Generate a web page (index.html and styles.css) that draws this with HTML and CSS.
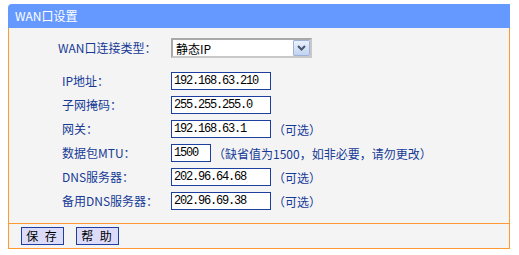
FILE: index.html
```html
<!DOCTYPE html>
<html lang="zh-CN">
<head>
  <meta charset="UTF-8">
  <title>WAN口设置</title>
  <link rel="stylesheet" href="styles.css">
</head>
<body>
  <div class="panel">
    <div class="panel-title">WAN口设置</div>

    <div class="panel-body">
      <div class="row row-type">
        <label class="lbl lbl-type">WAN口连接类型：</label>
        <div class="fake-select">
          <span class="fake-select-text">静态IP</span>
          <span class="fake-select-btn">
            <svg width="9" height="6" viewBox="0 0 9 6"><path d="M1 1 L4.5 4.5 L8 1" fill="none" stroke="#4a5670" stroke-width="2"/></svg>
          </span>
        </div>
      </div>

      <div class="row">
        <label class="lbl">IP地址：</label>
        <input class="txt" type="text" value="192.168.63.210">
      </div>
      <div class="row">
        <label class="lbl">子网掩码：</label>
        <input class="txt" type="text" value="255.255.255.0">
      </div>
      <div class="row">
        <label class="lbl">网关：</label>
        <input class="txt" type="text" value="192.168.63.1">
        <span class="hint">（可选）</span>
      </div>
      <div class="row">
        <label class="lbl">数据包MTU：</label>
        <input class="txt txt-short" type="text" value="1500">
        <span class="hint">（缺省值为1500，如非必要，请勿更改）</span>
      </div>
      <div class="row">
        <label class="lbl">DNS服务器：</label>
        <input class="txt" type="text" value="202.96.64.68">
        <span class="hint">（可选）</span>
      </div>
      <div class="row">
        <label class="lbl">备用DNS服务器：</label>
        <input class="txt" type="text" value="202.96.69.38">
        <span class="hint">（可选）</span>
      </div>
    </div>

    <div class="panel-foot">
      <button class="btn">保 存</button>
      <button class="btn">帮 助</button>
    </div>
  </div>
</body>
</html>
```

FILE: styles.css
```css
body {
  margin: 4px 0 0 8px;
  background-color: #ffffff;
  font-family: "Noto Sans CJK SC", "DejaVu Sans", sans-serif;
  font-size: 12px;
}
.panel {
  width: 502px;
}
.panel-title {
  height: 24px;
  line-height: 24px;
  padding-left: 7px;
  background-color: #6699ff;
  color: #ffffff;
  border-top-left-radius: 4px;
}
.panel-body {
  background-color: #f4f4f4;
  border-left: 1px solid #ff9933;
  border-right: 1px solid #ff9933;
  border-bottom: 1px solid #ff9933;
  padding: 10px 0 13px 0;
  display: flex;
  flex-direction: column;
  gap: 6px;
}
.row {
  display: flex;
  align-items: center;
  height: 18px;
}
.row-type {
  height: 20px;
  margin-bottom: 8px;
}
.lbl {
  width: 109px;
  padding-left: 53px;
  color: #163a96;
  line-height: 18px;
}
.lbl-type {
  padding-left: 49px;
  width: 113px;
}
.fake-select {
  box-sizing: border-box;
  width: 141px;
  height: 20px;
  border: 2px solid #a9a9a9;
  border-right-color: #c8c8c8;
  border-bottom-color: #c8c8c8;
  background-color: #ffffff;
  display: flex;
  align-items: center;
  justify-content: space-between;
}
.fake-select-text {
  padding-left: 3px;
  color: #000000;
}
.fake-select-btn {
  box-sizing: border-box;
  width: 17px;
  height: 16px;
  border: 1px solid #9fb3d8;
  border-radius: 1px;
  background: linear-gradient(#eaf1fc, #c2d3f0);
  display: flex;
  align-items: center;
  justify-content: center;
}
.txt {
  box-sizing: border-box;
  width: 100px;
  height: 18px;
  margin: 0;
  padding: 0 2px;
  border: 1px solid #1e3f9e;
  background-color: #ffffff;
  font-family: "Liberation Mono", monospace;
  font-size: 12px;
  letter-spacing: -1.2px;
  color: #000000;
  outline: none;
}
.txt-short {
  width: 40px;
}
.hint {
  margin-left: 2px;
  color: #163a96;
}
.panel-foot {
  background-color: #f4f4f4;
  border-left: 1px solid #ff9933;
  border-right: 1px solid #ff9933;
  border-bottom: 1px solid #ff9933;
  height: 24px;
  padding-left: 12px;
  display: flex;
  align-items: center;
  gap: 12px;
}
.btn {
  width: 43px;
  height: 18px;
  margin: 0;
  padding: 0;
  border: 1px solid #1e3f9e;
  background-color: #dcdcfa;
  font-family: "Noto Sans CJK SC", sans-serif;
  font-size: 12px;
  letter-spacing: 2px;
  line-height: 16px;
  color: #000000;
}
```
